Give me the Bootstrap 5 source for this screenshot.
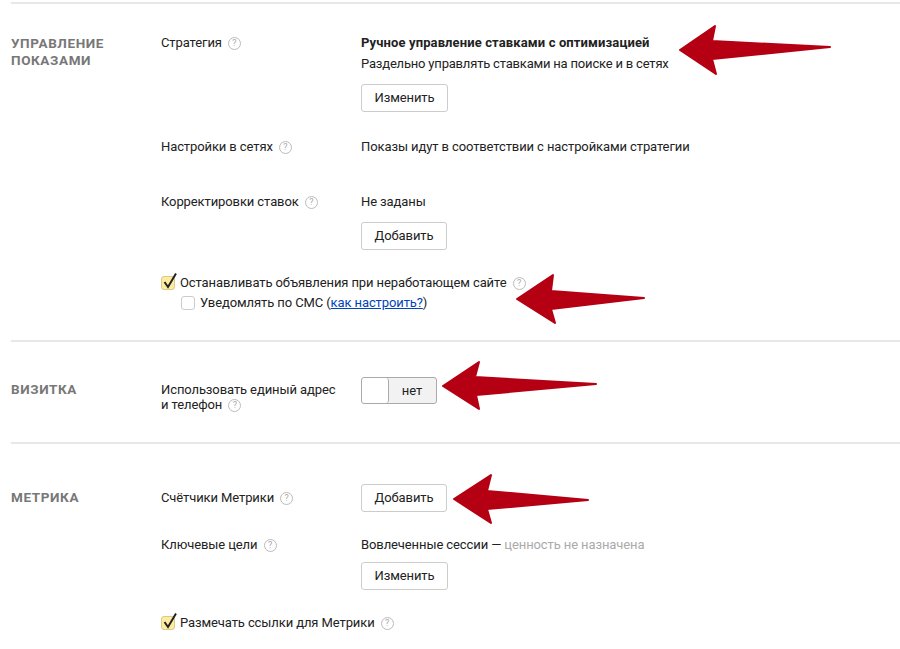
<!DOCTYPE html>
<html lang="ru">
<head>
<meta charset="utf-8">
<title>Настройки кампании</title>
<link href="https://cdn.jsdelivr.net/npm/bootstrap@5.3.0/dist/css/bootstrap.min.css" rel="stylesheet">
<style>
html,body{height:649px;overflow:hidden;background:#fff}
body{font-family:"Roboto","Noto Sans",sans-serif;font-size:13px;letter-spacing:-.1px;line-height:18px;color:#222;position:relative}
.sheet{padding-left:11px}
.block{border-top:2px solid #e8e8e8}
.block-one{margin-top:2px;height:338px;padding-top:30px}
.block-two{height:102px;padding-top:35px}
.block-three{padding-top:40px}
.head-col{width:150px;flex:none;font-weight:700;font-size:13.5px;letter-spacing:.6px;line-height:17px;color:#777;text-transform:uppercase;padding-top:4px}
.head-top{padding-top:1px}
.head-low{padding-top:5px}
.label-col{width:200px;flex:none}
.value-col{flex:1 1 auto}
.strategy-name{font-weight:700;letter-spacing:.12px}
.hint{display:inline-block;width:13px;height:13px;border:1px solid #bbb;border-radius:50%;font-size:9px;letter-spacing:0;line-height:11px;text-align:center;color:#aaa;margin-left:3px;vertical-align:1px}
.plain-btn{--bs-btn-padding-x:12.5px;--bs-btn-padding-y:0;--bs-btn-font-size:13px;--bs-btn-line-height:26px;--bs-btn-color:#222;--bs-btn-border-color:#ccc;--bs-btn-border-radius:3px;--bs-btn-bg:#fff;display:block;width:fit-content;letter-spacing:-.1px}
.gap-strategy-sub{margin-top:2px;line-height:20px;letter-spacing:-.19px}
.btn-gap-a{margin-top:10px}
.btn-gap-b{margin-top:11px}
.btn-gap-c{margin-top:8px}
.tick{width:14px;height:14px;flex:none;border:1px solid #d9c98a;border-radius:3px;background:#ffeba0;position:relative;margin-right:5px}
.tick svg{position:absolute;left:0;top:-5px;width:16px;height:18px}
.tick-empty{background:#fff;border-color:#ccc}
.link-blue{color:#04b;text-decoration:underline}
.switcher{display:flex;width:76px;height:27px;border:1px solid #aaa;border-radius:3px;background:#f2f2f2;overflow:hidden}
.switcher-knob{width:27px;background:#fff;border-right:1px solid #aaa;border-radius:3px}
.switcher-text{flex:1;text-align:center;line-height:25px;padding-right:1px}
.muted-grey{color:#aaa}
.arrows{position:absolute;left:0;top:0;width:900px;height:649px;pointer-events:none}
.network-row{margin-top:26px}
.bids-row{margin-top:37px}
.site-check{margin-top:24px}
.sms-check{margin-top:2px;padding-left:20px}
.key-row{margin-top:24px}
.metric-check{margin-top:24px}
.card-label{line-height:15px;padding-top:5px}
</style>
</head>
<body>
<div class="sheet">
  <section class="block block-one">
    <div class="d-flex">
      <div class="head-col head-top">Управление показами</div>
      <div class="flex-grow-1">
        <div class="d-flex">
          <div class="label-col">Стратегия <span class="hint">?</span></div>
          <div class="value-col">
            <div class="strategy-name">Ручное управление ставками с оптимизацией</div>
            <div class="gap-strategy-sub">Раздельно управлять ставками на поиске и в сетях</div>
            <button type="button" class="btn plain-btn btn-gap-a">Изменить</button>
          </div>
        </div>
        <div class="d-flex network-row">
          <div class="label-col">Настройки в сетях <span class="hint">?</span></div>
          <div class="value-col">Показы идут в соответствии с настройками стратегии</div>
        </div>
        <div class="d-flex bids-row">
          <div class="label-col">Корректировки ставок <span class="hint">?</span></div>
          <div class="value-col">
            <div>Не заданы</div>
            <button type="button" class="btn plain-btn btn-gap-b">Добавить</button>
          </div>
        </div>
        <div class="d-flex align-items-center site-check">
          <span class="tick"><svg viewBox="0 0 16 18"><path d="M2.5 10 L6 15 L14 1.5" fill="none" stroke="#222" stroke-width="2"/></svg></span>
          <span>Останавливать объявления при неработающем сайте <span class="hint">?</span></span>
        </div>
        <div class="d-flex align-items-center sms-check">
          <span class="tick tick-empty"></span>
          <span>Уведомлять по СМС (<a href="#" class="link-blue">как настроить?</a>)</span>
        </div>
      </div>
    </div>
  </section>
  <section class="block block-two">
    <div class="d-flex">
      <div class="head-col">Визитка</div>
      <div class="label-col card-label">Использовать единый адрес<br>и телефон <span class="hint">?</span></div>
      <div class="value-col">
        <div class="switcher"><span class="switcher-knob"></span><span class="switcher-text">нет</span></div>
      </div>
    </div>
  </section>
  <section class="block block-three">
    <div class="d-flex">
      <div class="head-col head-low">Метрика</div>
      <div class="flex-grow-1">
        <div class="d-flex align-items-center">
          <div class="label-col">Счётчики Метрики <span class="hint">?</span></div>
          <div class="value-col"><button type="button" class="btn plain-btn">Добавить</button></div>
        </div>
        <div class="d-flex key-row">
          <div class="label-col">Ключевые цели <span class="hint">?</span></div>
          <div class="value-col">
            <div>Вовлеченные сессии — <span class="muted-grey">ценность не назначена</span></div>
            <button type="button" class="btn plain-btn btn-gap-c">Изменить</button>
          </div>
        </div>
        <div class="d-flex align-items-center metric-check">
          <span class="tick"><svg viewBox="0 0 16 18"><path d="M2.5 10 L6 15 L14 1.5" fill="none" stroke="#222" stroke-width="2"/></svg></span>
          <span>Размечать ссылки для Метрики <span class="hint">?</span></span>
        </div>
      </div>
    </div>
  </section>
</div>
<svg class="arrows" viewBox="0 0 900 649" aria-hidden="true">
  <g fill="#b50014" stroke="#b50014" stroke-width="2" stroke-linejoin="round">
    <polygon points="680,50 715,26 712,41 830,47 712,59 716,74"/>
    <polygon points="517,299 553,275 551,291 644,298 551,309 555,323"/>
    <polygon points="443,386 479,362 475,377 596,384 476,395 479,409"/>
    <polygon points="454,499 491,475 487,491 588,500 487,509 491,523"/>
  </g>
</svg>
<script src="https://cdn.jsdelivr.net/npm/bootstrap@5.3.0/dist/js/bootstrap.bundle.min.js"></script>
</body>
</html>
